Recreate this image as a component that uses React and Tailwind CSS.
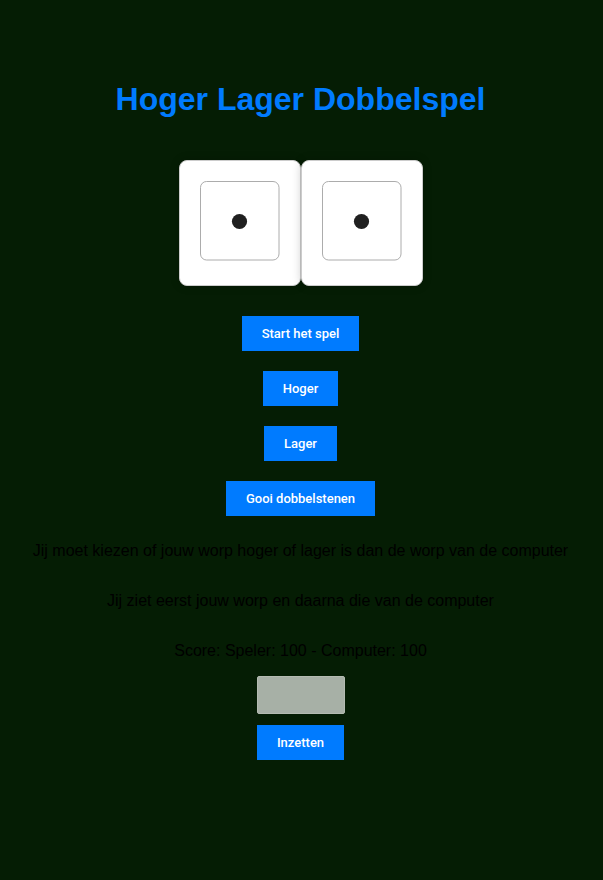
const buttonClass =
  "h-[35px] bg-[#007bff] px-5 font-[Roboto,Arial,sans-serif] text-[13px] font-medium text-white hover:bg-[#0056b3]";

function Die({ label }) {
  return (
    <div className="h-[126px] w-[122px] rounded-lg border border-[#cccccc] bg-white p-5 shadow-[0_0_10px_rgba(0,0,0,0.2)]">
      <svg
        role="img"
        aria-label={label}
        viewBox="0 0 80 80"
        className="block size-20"
      >
        <rect x="0.5" y="0.5" width="78.5" height="78.5" rx="6" fill="white" stroke="#a3a3a3" strokeWidth="0.9" />
        <circle cx="39.5" cy="40.5" r="7.6" fill="#202020" />
      </svg>
    </div>
  );
}

export default function App() {
  return (
    <main className="flex min-h-screen flex-col items-center bg-[#051d04] pt-20 pr-[18px] pb-[120px] pl-4 text-center font-['Liberation_Sans',Arial,sans-serif] text-base text-black">
      <h1 className="text-[32px] leading-[38px] font-bold text-[#007bff]">Hoger Lager Dobbelspel</h1>
      <div className="mt-[42px] flex">
        <Die label="Dobbelsteen speler: 1" />
        <Die label="Dobbelsteen computer: 1" />
      </div>
      <div className="mt-[30px] flex flex-col items-center gap-5">
        <button type="button" className={buttonClass}>Start het spel</button>
        <button type="button" className={buttonClass}>Hoger</button>
        <button type="button" className={buttonClass}>Lager</button>
        <button type="button" className={buttonClass}>Gooi dobbelstenen</button>
      </div>
      <div className="mt-[26px] flex flex-col gap-8 leading-[18px]">
        <p>Jij moet kiezen of jouw worp hoger of lager is dan de worp van de computer</p>
        <p>Jij ziet eerst jouw worp en daarna die van de computer</p>
        <p>Score: Speler: 100 - Computer: 100</p>
      </div>
      <form className="mt-4 flex flex-col items-center gap-[11px]" onSubmit={(event) => event.preventDefault()}>
        <input
          type="number"
          aria-label="Inzet"
          className="h-[38px] w-[88px] rounded-[2px] border border-[#b4bbb2] bg-[#a7b0a6] px-2 text-[13px]"
        />
        <button type="submit" className={buttonClass}>Inzetten</button>
      </form>
    </main>
  );
}
